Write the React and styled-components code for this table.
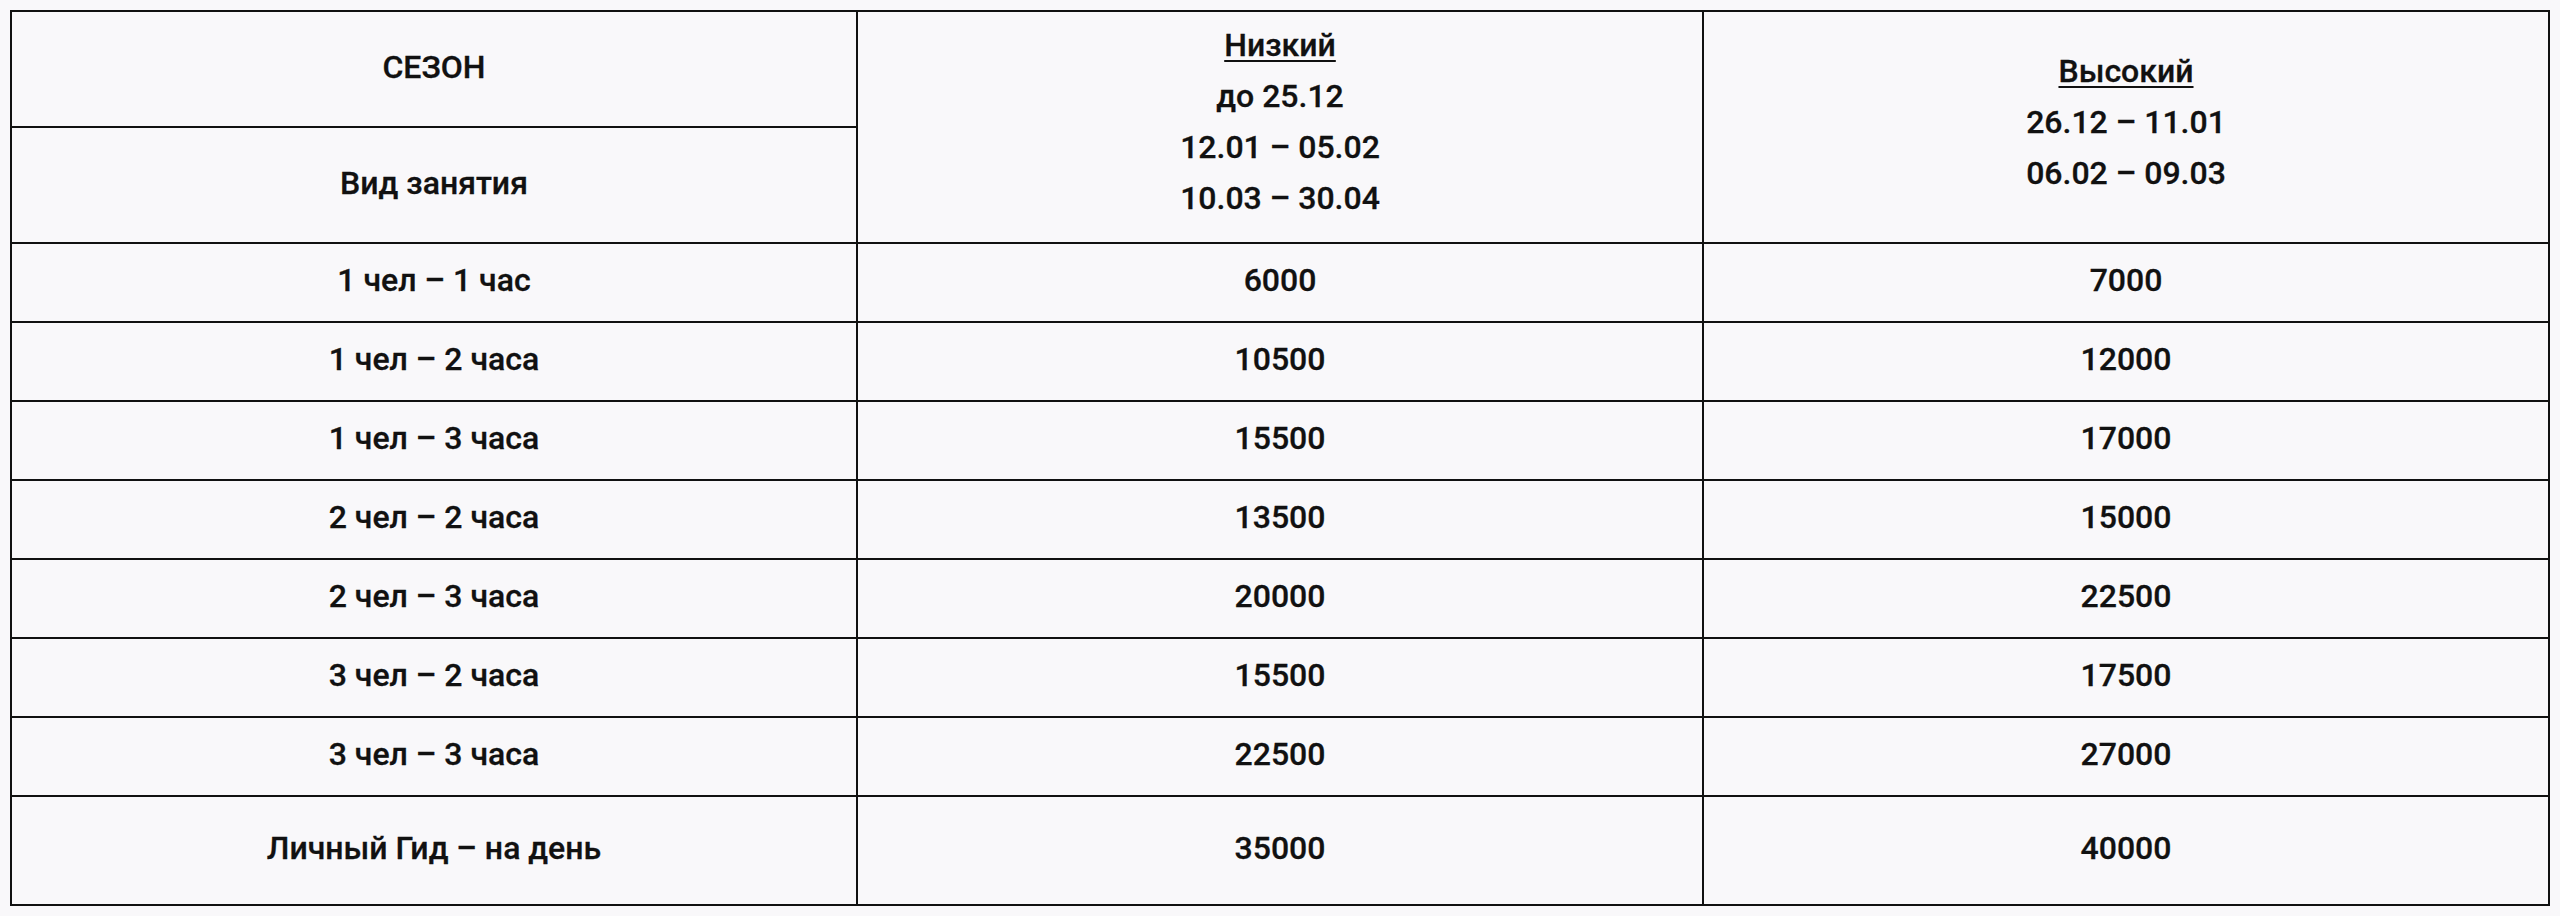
import styled, { createGlobalStyle } from "styled-components";

const GlobalStyle = createGlobalStyle`
  html, body {
    margin: 0;
    padding: 0;
    background: #f9f8fa;
  }
  body {
    font-family: Roboto, "Noto Sans", "Liberation Sans", sans-serif;
    color: #111;
  }
`;

const Page = styled.div`
  padding: 10px 10px 0 10px;
`;

const Table = styled.table`
  width: 100%;
  table-layout: fixed;
  border-collapse: collapse;
  font-size: 32px;
  font-weight: 500;
  text-align: center;
  -webkit-text-stroke: 0.3px #111;

  td {
    border: 2px solid #111;
    vertical-align: middle;
    padding: 0 10px 5px;
  }
`;

const HeadRow = styled.tr`
  height: 116px;
`;

const BodyRow = styled.tr`
  height: ${(p) => (p.$tall ? "109px" : "79px")};
`;

const Season = styled.td`
  line-height: 51px;
  padding-bottom: ${(p) => (p.$shift ? "10px" : "5px")} !important;
`;

const SeasonName = styled.div`
  text-decoration: underline;
  text-decoration-thickness: 2px;
  text-underline-offset: 4px;
`;

const rows = [
  ["1 чел – 1 час", "6000", "7000"],
  ["1 чел – 2 часа", "10500", "12000"],
  ["1 чел – 3 часа", "15500", "17000"],
  ["2 чел – 2 часа", "13500", "15000"],
  ["2 чел – 3 часа", "20000", "22500"],
  ["3 чел – 2 часа", "15500", "17500"],
  ["3 чел – 3 часа", "22500", "27000"],
  ["Личный Гид – на день", "35000", "40000"],
];

export default function App() {
  return (
    <>
      <GlobalStyle />
      <Page>
        <Table>
          <tbody>
            <HeadRow>
              <td>СЕЗОН</td>
              <Season rowSpan={2} $shift>
                <SeasonName>Низкий</SeasonName>
                <div>до 25.12</div>
                <div>12.01 – 05.02</div>
                <div>10.03 – 30.04</div>
              </Season>
              <Season rowSpan={2} $shift>
                <SeasonName>Высокий</SeasonName>
                <div>26.12 – 11.01</div>
                <div>06.02 – 09.03</div>
              </Season>
            </HeadRow>
            <HeadRow>
              <td>Вид занятия</td>
            </HeadRow>
            {rows.map((r, i) => (
              <BodyRow key={r[0]} $tall={i === rows.length - 1}>
                <td>{r[0]}</td>
                <td>{r[1]}</td>
                <td>{r[2]}</td>
              </BodyRow>
            ))}
          </tbody>
        </Table>
      </Page>
    </>
  );
}
